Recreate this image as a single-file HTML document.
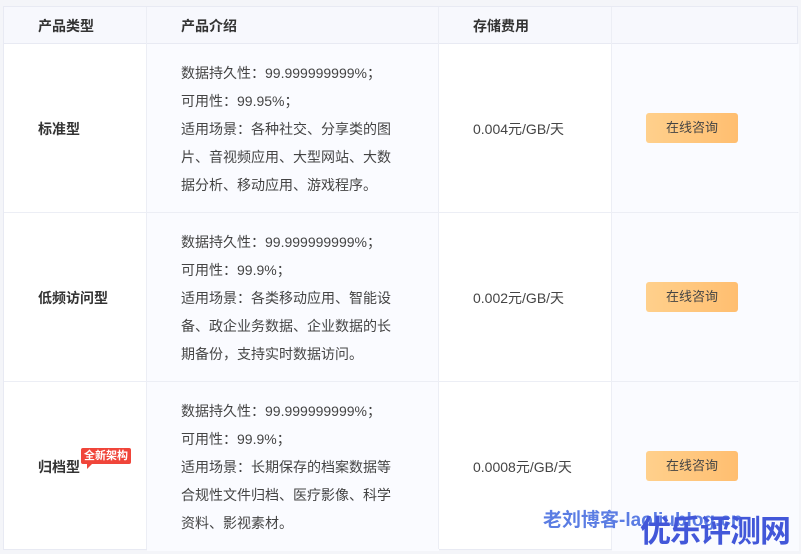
<!DOCTYPE html>
<html><head><meta charset="utf-8"><style>
body{margin:0;width:801px;height:554px;background:#f4f5f9;font-family:"Liberation Sans","Noto Sans CJK SC",sans-serif;position:relative;overflow:hidden}
.t{position:absolute;left:3px;top:6px;width:795px;height:544px;background:#fff;border:1px solid #e8eaf3;box-sizing:border-box}
.hd{position:absolute;left:0;top:0;width:100%;height:37px;background:#f7f8fd;border-bottom:1px solid #e8eaf3;font-size:14px;font-weight:bold;color:#333;box-sizing:border-box}
.hd span{position:absolute;top:9px}
.col{position:absolute;top:0;bottom:0;width:1px;background:#eceef5}
.row{position:absolute;left:0;width:100%;height:169px;border-bottom:1px solid #eceef5;box-sizing:border-box}
.c2{position:absolute;left:143px;width:292px;top:0;height:100%;background:#fafbff}
.c4{position:absolute;left:608px;width:187px;top:0;height:100%;background:#fafbff}
.name{position:absolute;left:34px;top:75px;font-size:14px;font-weight:bold;color:#333}
.desc{position:absolute;left:177px;top:15px;width:218px;font-size:14px;line-height:28px;color:#444}
.price{position:absolute;left:469px;top:75px;font-size:14px;color:#444}
.btn{position:absolute;left:642px;top:69px;width:92px;height:30px;border-radius:3px;background:linear-gradient(90deg,#ffd08c,#ffbe70);font-size:13px;color:#444;text-align:center;line-height:30px}
.tag{position:absolute;left:81px;top:448px;background:#f0453a;color:#fff;font-size:11px;font-weight:bold;padding:1px 3px;border-radius:2px;line-height:14px}
.tag:after{content:"";position:absolute;left:6px;bottom:-5px;border-left:5px solid #f0453a;border-bottom:5px solid transparent}
</style></head><body>
<div class="t">
<div class="row" style="top:37px"><div class="c2"></div><div class="c4"></div>
<div class="name">标准型</div>
<div class="desc">数据持久性：99.999999999%；<br>可用性：99.95%；<br>适用场景：各种社交、分享类的图片、音视频应用、大型网站、大数据分析、移动应用、游戏程序。</div>
<div class="price">0.004元/GB/天</div><div class="btn">在线咨询</div></div>
<div class="row" style="top:206px"><div class="c2"></div><div class="c4"></div>
<div class="name">低频访问型</div>
<div class="desc">数据持久性：99.999999999%；<br>可用性：99.9%；<br>适用场景：各类移动应用、智能设备、政企业务数据、企业数据的长期备份，支持实时数据访问。</div>
<div class="price">0.002元/GB/天</div><div class="btn">在线咨询</div></div>
<div class="row" style="top:375px;border-bottom:none"><div class="c2"></div><div class="c4"></div>
<div class="name">归档型</div>
<div class="desc">数据持久性：99.999999999%；<br>可用性：99.9%；<br>适用场景：长期保存的档案数据等合规性文件归档、医疗影像、科学资料、影视素材。</div>
<div class="price">0.0008元/GB/天</div><div class="btn">在线咨询</div></div>
<div class="hd"><span style="left:34px">产品类型</span><span style="left:177px">产品介绍</span><span style="left:469px">存储费用</span></div>
<div class="col" style="left:142px"></div><div class="col" style="left:434px"></div><div class="col" style="left:607px"></div>
</div>
<div class="tag">全新架构</div>
<div style="position:absolute;left:543px;top:505px;font-size:19px;font-weight:bold;color:#4a6fe0;opacity:.9">老刘博客-laoliublog.cn</div>
<div style="position:absolute;left:640px;top:506px;font-size:31px;font-weight:bold;color:#4257d9;letter-spacing:-1px">优乐评测网</div>
</body></html>
